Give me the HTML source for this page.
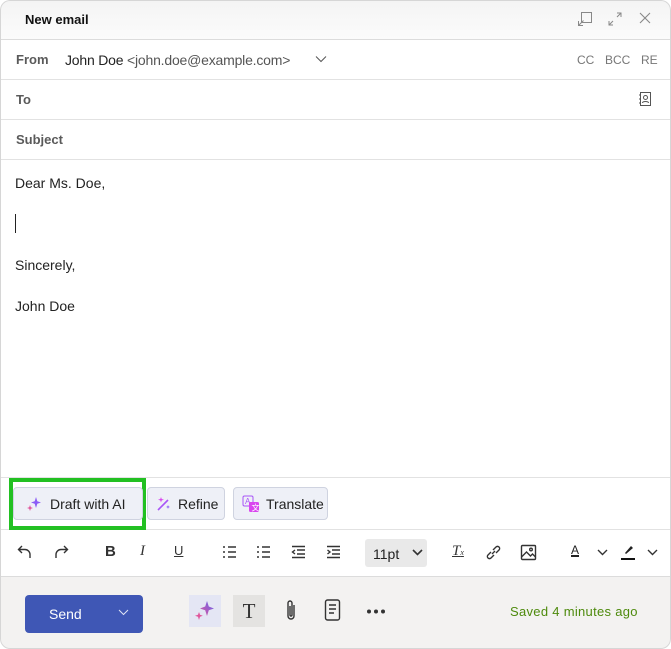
<!DOCTYPE html>
<html><head><meta charset="utf-8"><style>
*{box-sizing:border-box;margin:0;padding:0}
body{width:671px;height:649px;background:#fff;font-family:"Liberation Sans",sans-serif;position:relative;overflow:hidden;color:#222}
.win{position:absolute;left:0;top:0;width:671px;height:649px;border-radius:10px;overflow:hidden;background:#fff}
.frame{position:absolute;left:0;top:0;width:671px;height:649px;border:1px solid #d6d6d6;border-radius:10px}
.hdr{position:absolute;left:0;top:0;width:100%;height:40px;background:linear-gradient(#f4f4f4,#fbfbfb);border-bottom:1px solid #dcdcdc}
.hdr b{position:absolute;left:25px;top:12px;font-size:13px;color:#111}
.row{position:absolute;left:0;width:100%;height:40px;border-bottom:1px solid #e2e2e2}
.lbl{position:absolute;left:16px;top:13px;font-size:13px;font-weight:bold;color:#5a5a5a}
.ab{position:absolute;font-size:12px;color:#777;top:14px}
.body{position:absolute;left:15px;font-size:14px;color:#222}
.aibar{position:absolute;left:0;top:477px;width:100%;height:53px;border-top:1px solid #e2e2e2;border-bottom:1px solid #e2e2e2}
.btn{position:absolute;top:9px;height:33px;background:#eef0f7;border:1px solid #cfd3e0;border-radius:4px;font-size:14px;color:#222}
.btn span{position:absolute;top:8px}
.tb{position:absolute;top:529px;left:0;width:100%;height:47px}
.tb .i{position:absolute;top:14px;font-size:15px;color:#333}
.foot{position:absolute;left:0;top:576px;width:100%;height:73px;background:#f3f2f1;border-top:1px solid #dcdcdc}
</style></head><body><div class="win">
<div class="hdr"><b>New email</b>
<svg style="position:absolute;left:577px;top:11px" width="16" height="16" viewBox="0 0 16 16" fill="none" stroke="#888" stroke-width="1"><rect x="4.5" y="1.5" width="10" height="10"/><path d="M1.5 14.5l5-5M1.5 10v4.5H6"/></svg>
<svg style="position:absolute;left:607px;top:11px" width="16" height="16" viewBox="0 0 16 16" fill="none" stroke="#888" stroke-width="1"><path d="M10 2h4v4M14 2l-4 4M6 14H2v-4M2 14l4-4"/></svg>
<svg style="position:absolute;left:638px;top:11px" width="14" height="14" viewBox="0 0 14 14" stroke="#888" stroke-width="1.1"><path d="M2 2l10 10M12 2L2 12"/></svg>
</div>
<div class="row" style="top:40px"><span class="lbl" style="top:12px">From</span>
<span style="position:absolute;left:65px;top:12px;font-size:14px;color:#222;letter-spacing:-0.2px">John Doe <span style="color:#555">&lt;john.doe@example.com&gt;</span></span>
<svg style="position:absolute;left:315px;top:15px" width="12" height="8" viewBox="0 0 12 8" fill="none" stroke="#555"><path d="M1 1.5l5 5 5-5"/></svg>
<span class="ab" style="left:577px;top:13px">CC</span><span class="ab" style="left:605px;top:13px">BCC</span><span class="ab" style="left:641px;top:13px">RE</span></div>
<div class="row" style="top:80px"><span class="lbl" style="top:12px">To</span>
<svg style="position:absolute;left:638px;top:11px" width="14" height="16" viewBox="0 0 14 16" fill="none" stroke="#555"><rect x="2.5" y="1.5" width="10" height="13"/><circle cx="7.5" cy="6.5" r="2"/><path d="M4.5 12c0-2 6-2 6 0M1 4h2M1 8h2M1 12h2"/></svg></div>
<div class="row" style="top:120px"><span class="lbl" style="top:12px">Subject</span></div>
<div class="body" style="top:175px">Dear Ms. Doe,</div>
<div style="position:absolute;left:15px;top:214px;width:1px;height:19px;background:#222"></div>
<div class="body" style="top:257px">Sincerely,</div>
<div class="body" style="top:298px">John Doe</div>
<div class="aibar">
<div style="position:absolute;left:9px;top:0;width:137px;height:52px;border:4px solid #22c022"></div>
<div class="btn" style="left:13px;width:130px"><svg style="position:absolute;left:12px;top:8px" width="16" height="16" viewBox="0 0 16 16"><path d="M10 1l1.3 4.2L15 6.5l-3.7 1.3L10 12 8.7 7.8 5 6.5l3.7-1.3z" fill="#8b5cf6"/><path d="M4 9l.8 2.2L7 12l-2.2.8L4 15l-.8-2.2L1 12l2.2-.8z" fill="#e0559b"/></svg><span style="left:36px">Draft with AI</span></div>
<div class="btn" style="left:147px;width:78px"><svg style="position:absolute;left:7px;top:8px" width="16" height="16" viewBox="0 0 16 16"><path d="M3 14L13 4" stroke="#a855f7" stroke-width="1.6"/><path d="M6 1l.7 2L9 3.7 6.7 4.4 6 6.5 5.3 4.4 3 3.7l2.3-.7z" fill="#d946ef"/><path d="M13 9l.5 1.4 1.5.6-1.5.5L13 13l-.5-1.5L11 11l1.5-.6z" fill="#8b5cf6"/></svg><span style="left:30px">Refine</span></div>
<div class="btn" style="left:233px;width:95px"><svg style="position:absolute;left:8px;top:7px" width="18" height="18" viewBox="0 0 18 18"><rect x="1" y="1" width="10" height="10" rx="1.5" fill="none" stroke="#a855f7"/><text x="3" y="9" font-size="8" fill="#a855f7" font-family="Liberation Sans">A</text><rect x="7" y="7" width="10" height="10" rx="1.5" fill="#d946ef"/><text x="9.5" y="15.5" font-size="8" fill="#fff" font-family="Liberation Sans">文</text></svg><span style="left:32px">Translate</span></div>
</div>
<div class="tb">
<svg style="position:absolute;left:17px;top:16px" width="16" height="14" viewBox="0 0 16 14" fill="none" stroke="#333" stroke-width="1.4"><path d="M5 1L1.5 4.5 5 8M2 4.5h6a5 5 0 015 5V13"/></svg>
<svg style="position:absolute;left:53px;top:16px" width="16" height="14" viewBox="0 0 16 14" fill="none" stroke="#333" stroke-width="1.4"><path d="M11 1l3.5 3.5L11 8M14 4.5H8a5 5 0 00-5 5V13"/></svg>
<span class="i" style="left:105px;font-weight:bold">B</span>
<span class="i" style="left:140px;font-style:italic;font-family:'Liberation Serif'">I</span>
<span class="i" style="left:174px;text-decoration:underline;font-size:13px">U</span>
<svg style="position:absolute;left:222px;top:16px" width="15" height="14" viewBox="0 0 15 14" stroke="#333" stroke-width="1.6"><path d="M1 2h2M6 2h8M1 7h2M6 7h8M1 12h2M6 12h8"/></svg>
<svg style="position:absolute;left:256px;top:16px" width="15" height="14" viewBox="0 0 15 14" stroke="#333" stroke-width="1.4"><path d="M1 2h2M6 2h8M1 7h2M6 7h8M1 12h2M6 12h8"/></svg>
<svg style="position:absolute;left:291px;top:16px" width="15" height="14" viewBox="0 0 15 14" stroke="#333" stroke-width="1.4" fill="none"><path d="M1 1.5h13M6 5h8M6 9h8M1 12.5h13M4 5L1.5 7 4 9"/></svg>
<svg style="position:absolute;left:326px;top:16px" width="15" height="14" viewBox="0 0 15 14" stroke="#333" stroke-width="1.4" fill="none"><path d="M1 1.5h13M6 5h8M6 9h8M1 12.5h13M1.5 5L4 7 1.5 9"/></svg>
<div style="position:absolute;left:365px;top:10px;width:62px;height:28px;background:#e9e9e9;border-radius:3px;font-size:14px;padding:7px 0 0 8px;color:#222">11pt<svg style="position:absolute;left:47px;top:10px" width="11" height="7" viewBox="0 0 11 7" fill="none" stroke="#333" stroke-width="1.6"><path d="M1 1l4.5 4.5L10 1"/></svg></div>
<span class="i" style="left:452px;font-style:italic;text-decoration:underline;font-family:'Liberation Serif'">T<span style="font-size:8px">x</span></span>
<svg style="position:absolute;left:485px;top:15px" width="17" height="17" viewBox="0 0 17 17" fill="none" stroke="#333" stroke-width="1.4"><path d="M7 10l3-3M6 8l-3 3a2 2 0 003 3l3-3M11 9l3-3a2 2 0 00-3-3L8 6"/></svg>
<svg style="position:absolute;left:520px;top:15px" width="17" height="17" viewBox="0 0 17 17" fill="none" stroke="#333" stroke-width="1.4"><rect x="1.5" y="1.5" width="14" height="14" rx="1"/><path d="M1.5 13l5-5 4 4 2-2 3 3"/><circle cx="11" cy="5.5" r="1.3"/></svg>
<span style="position:absolute;left:571px;top:14px;font-size:12px;text-decoration:underline;text-decoration-thickness:2px">A</span>
<svg style="position:absolute;left:597px;top:20px" width="11" height="7" viewBox="0 0 11 7" fill="none" stroke="#333" stroke-width="1.4"><path d="M1 1l4.5 4.5L10 1"/></svg>
<svg style="position:absolute;left:620px;top:15px" width="16" height="16" viewBox="0 0 16 16"><path d="M5 9l6-7 2 2-7 6z" fill="#222"/><path d="M1 15h14" stroke="#111" stroke-width="2"/></svg>
<svg style="position:absolute;left:647px;top:20px" width="11" height="7" viewBox="0 0 11 7" fill="none" stroke="#333" stroke-width="1.4"><path d="M1 1l4.5 4.5L10 1"/></svg>
</div>
<div class="foot">
<div style="position:absolute;left:25px;top:18px;width:118px;height:38px;background:#3f57b5;border-radius:4px;color:#fff;font-size:14px"><span style="position:absolute;left:24px;top:11px">Send</span><svg style="position:absolute;left:93px;top:14px" width="11" height="7" viewBox="0 0 11 7" fill="none" stroke="#dfe4f5"><path d="M1 1l4.5 4.5L10 1"/></svg></div>
<div style="position:absolute;left:189px;top:18px;width:32px;height:32px;background:#e4e6f4"><svg style="position:absolute;left:5px;top:5px" width="22" height="22" viewBox="0 0 22 22"><defs><linearGradient id="g" x1="0" y1="1" x2="1" y2="0"><stop offset="0" stop-color="#e0559b"/><stop offset="1" stop-color="#6366f1"/></linearGradient></defs><path d="M13 1l1.8 5.5L20 8.5l-5.2 1.8L13 16l-1.8-5.7L6 8.5l5.2-2z" fill="url(#g)"/><path d="M5 12l1 2.8 2.8 1-2.8 1L5 20l-1-3.2L1 15.8l3-1z" fill="#e0559b"/></svg></div>
<div style="position:absolute;left:233px;top:18px;width:32px;height:32px;background:#e4e3e1;font-family:'Liberation Serif';font-size:21px;color:#333;text-align:center;line-height:32px">T</div>
<svg style="position:absolute;left:284px;top:22px" width="14" height="24" viewBox="0 0 14 24" fill="none" stroke="#333" stroke-width="1.4"><path d="M10 6v11a3 3 0 01-6 0V4a2 2 0 014 0v12a1 1 0 01-2 0V7"/></svg>
<svg style="position:absolute;left:324px;top:22px" width="17" height="22" viewBox="0 0 17 22" fill="none" stroke="#333" stroke-width="1.4"><rect x="1.5" y="1" width="14" height="20" rx="2"/><path d="M5 6h7M5 10h7M5 14h5"/></svg>
<svg style="position:absolute;left:366px;top:32px" width="20" height="5" viewBox="0 0 20 5" fill="#333"><circle cx="3" cy="2.5" r="2"/><circle cx="10" cy="2.5" r="2"/><circle cx="17" cy="2.5" r="2"/></svg>
<span style="position:absolute;left:510px;top:27px;font-size:13px;color:#4d8a0c;letter-spacing:0.3px">Saved 4 minutes ago</span>
</div>
<div class="frame"></div>
</div></body></html>
